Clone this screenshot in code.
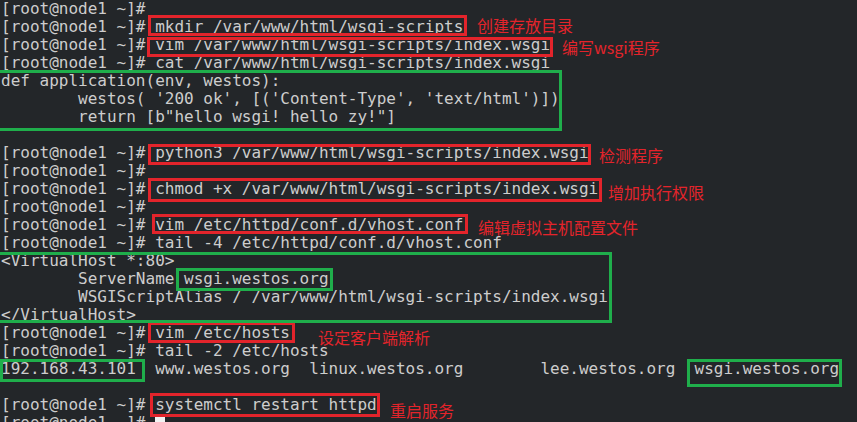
const prompt = "[root@node1 ~]# ";

const lines: string[] = [
  prompt,
  prompt + "mkdir /var/www/html/wsgi-scripts",
  prompt + "vim /var/www/html/wsgi-scripts/index.wsgi",
  prompt + "cat /var/www/html/wsgi-scripts/index.wsgi",
  "def application(env, westos):",
  "        westos( '200 ok', [('Content-Type', 'text/html')])",
  '        return [b"hello wsgi! hello zy!"]',
  "",
  prompt + "python3 /var/www/html/wsgi-scripts/index.wsgi",
  prompt,
  prompt + "chmod +x /var/www/html/wsgi-scripts/index.wsgi",
  prompt,
  prompt + "vim /etc/httpd/conf.d/vhost.conf",
  prompt + "tail -4 /etc/httpd/conf.d/vhost.conf",
  "<VirtualHost *:80>",
  "        ServerName wsgi.westos.org",
  "        WSGIScriptAlias / /var/www/html/wsgi-scripts/index.wsgi",
  "</VirtualHost>",
  prompt + "vim /etc/hosts",
  prompt + "tail -2 /etc/hosts",
  "192.168.43.101  www.westos.org  linux.westos.org        lee.westos.org  wsgi.westos.org",
  "",
  prompt + "systemctl restart httpd",
];

// red = commands, green = output worth noticing
const boxes = [
  "left-[148px] top-[15px] w-[319px] h-[21px] border-[#e3242b]",
  "left-[147px] top-[37px] w-[406px] h-[20px] border-[#e3242b]",
  "left-[148px] top-[144px] w-[443px] h-[21px] border-[#e3242b]",
  "left-[148px] top-[178px] w-[454px] h-[24px] border-[#e3242b]",
  "left-[152px] top-[214px] w-[316px] h-[20px] border-[#e3242b]",
  "left-[148px] top-[322px] w-[147px] h-[21px] border-[#e3242b]",
  "left-[150px] top-[393px] w-[230px] h-[24px] border-[#e3242b]",
  "-left-[3px] top-[70px] w-[565px] h-[61px] border-[#1fae4b]",
  "-left-[3px] top-[252px] w-[615px] h-[71px] border-[#1fae4b]",
  "left-[176px] top-[268px] w-[157px] h-[23px] border-[#1fae4b]",
  "left-0 top-[359px] w-[145px] h-[23px] border-[#1fae4b]",
  "left-[687px] top-[359px] w-[155px] h-[28px] border-[#1fae4b]",
];

const notes = [
  { text: "创建存放目录", cls: "left-[477px] top-[17px]" },
  { text: "编写wsgi程序", cls: "left-[562px] top-[39px]" },
  { text: "检测程序", cls: "left-[599px] top-[147px]" },
  { text: "增加执行权限", cls: "left-[608px] top-[184px]" },
  { text: "编辑虚拟主机配置文件", cls: "left-[478px] top-[219px]" },
  { text: "设定客户端解析", cls: "left-[318px] top-[329px]" },
  { text: "重启服务", cls: "left-[390px] top-[402px]" },
];

const App = () => {
  return (
    <div className="relative w-[857px] h-[422px] overflow-hidden bg-[#232629]">
      <div className="pl-[1px] text-[16px] leading-[18px] text-[#cdcdcd] whitespace-pre font-['DejaVu_Sans_Mono',monospace]">
        {lines.map((line, i) => (
          <div key={i} className="h-[18px]">
            {line}
          </div>
        ))}
        <div className="h-[18px]">
          {prompt}
          <span className="inline-block w-[10px] h-[16px] align-top mt-[1px] bg-[#f2f2f2]" />
        </div>
      </div>

      {boxes.map((cls, i) => (
        <div key={i} className={`absolute border-[3px] ${cls}`} />
      ))}

      {notes.map((n) => (
        <div
          key={n.text}
          className={`absolute text-[16px] leading-none text-[#e3242b] font-['Noto_Sans_CJK_SC',sans-serif] ${n.cls}`}
        >
          {n.text}
        </div>
      ))}
    </div>
  );
};

export default App;
